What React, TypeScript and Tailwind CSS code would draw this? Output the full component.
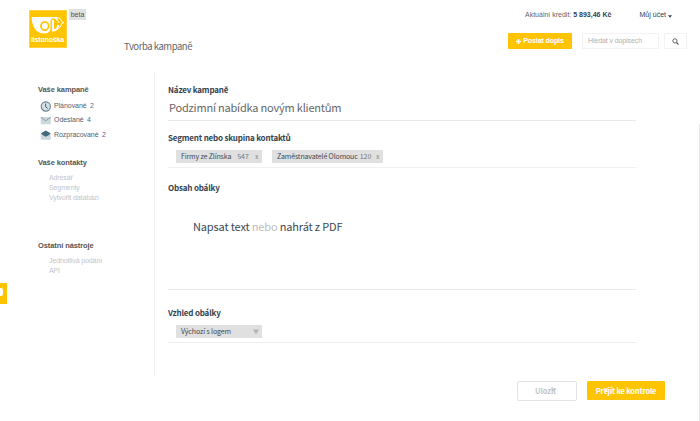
import type { ReactNode } from "react"

const sourceFont = "font-['Noto_Sans_CJK_JP','Noto_Sans',sans-serif]"

function Logo() {
  return (
    <div className="relative w-[38px] h-[38px] bg-[#ffc400]">
      <svg viewBox="0 0 38 38" className="absolute inset-0 w-full h-full" fill="none">
        <rect x="0.5" y="0.5" width="37" height="37" stroke="#fff" strokeWidth="0.7" strokeDasharray="1 1" opacity="0.7" />
        <path d="M2.600 7H21l1.500 2v7a7 7.500 0 0 1-8 7.500C7 23 2.600 16 2.600 7Z" fill="#fff" />
        <ellipse cx="15.800" cy="16" rx="3.800" ry="4.200" fill="#fff" stroke="#ffc400" strokeWidth="1.800" />
        <path d="M21.500 10h1.300v12h-1.300z" fill="#ffc400" />
        <path d="M24 10v10.500c3.400-.3 5.200-2.500 5.200-5.500" stroke="#fff" strokeWidth="2" />
        <path d="M20.500 7.700h4c2.600 0 3.700 1.100 4 2.800" stroke="#fff" strokeWidth="1.500" />
        <path d="M26 7.500c3.500-.5 6.200 1 6.700 4l2 1.200-2 1c-.6 2.800-2.200 4.300-4.200 4.800" stroke="#fff" strokeWidth="1" />
        <circle cx="29.500" cy="12" r="0.800" fill="#fff" />
      </svg>
      <span className="absolute left-0 w-[37px] top-[26px] text-center text-[7px] leading-[8px] tracking-[-0.15px] font-bold text-white">listonoška</span>
    </div>
  )
}

function ClockIcon() {
  return (
    <svg width="12" height="12" viewBox="0 0 12 12" fill="none">
      <circle cx="5.800" cy="6.500" r="4.600" fill="#d5e0e4" stroke="#668490" strokeWidth="1.100" />
      <path d="M5.600 3.600v3.200L7.700 8.400" stroke="#45616f" strokeWidth="1" />
    </svg>
  )
}

function MailIcon() {
  return (
    <svg width="12" height="12" viewBox="0 0 12 12" fill="none">
      <path d="M.7 3h10.100v7.200H.7z" fill="#cbd9dd" />
      <path d="M1 3.200l4.800 3.600 4.800-3.600" stroke="#7d98a2" strokeWidth="0.900" />
    </svg>
  )
}

function OpenMailIcon() {
  return (
    <svg width="12" height="12" viewBox="0 0 12 12">
      <path d="M.7 4.500h10.100v6.200H.7z" fill="#cbd9dd" />
      <path d="M5.800 1.600l4.700 2.600-1.500 1.700-3.200 1.800-3.200-1.800L1 4.200z" fill="#45687a" />
    </svg>
  )
}

const campaigns = [
  { name: "Plánované", count: 2, icon: <ClockIcon />, row: "h-[14px]", text: "w-[36px]" },
  { name: "Odeslané", count: 4, icon: <MailIcon />, row: "h-[14px]", text: "w-[33px]" },
  { name: "Rozpracované", count: 2, icon: <OpenMailIcon />, row: "h-[16px]", text: "w-[48px]" },
]

function SideTitle({ children }: { children: ReactNode }) {
  return <h2 className="text-[7.5px] leading-[10px] tracking-[-0.09px] font-bold text-[#555]">{children}</h2>
}

function SideLinks({ items }: { items: string[] }) {
  return (
    <ul className="pt-[5px] pl-[11px] text-[7px] leading-[10px] tracking-[-0.11px] text-[#c3c4cc]">
      {items.map(item => <li key={item}>{item}</li>)}
    </ul>
  )
}

function Label({ children }: { children: ReactNode }) {
  return <h3 className="text-[8px] leading-[12px] tracking-[-0.17px] font-bold text-[#34424f]">{children}</h3>
}

function Tag({ name, count, width, gap }: { name: string; count: number; width: string; gap: string }) {
  return (
    <div className={`${width} h-[13px] flex items-center whitespace-nowrap rounded-[1px] bg-[#e0e0e0] pl-[5px] pr-[4px] text-[7px] leading-[13px] tracking-[-0.13px] text-[#3d4852]`}>
      <span>{name}</span>
      <span className={`${gap} tracking-normal text-[#777]`}>{count}</span>
      <span className="ml-auto text-[6px] text-[#777]">x</span>
    </div>
  )
}

export default function App() {
  return (
    <div className="relative w-[700px] h-[421px] overflow-hidden bg-white font-['Liberation_Sans',Arial,sans-serif] text-[#555]">
      {/* Header */}
      <header className="flex h-[72px]">
        <div className="flex items-start gap-[2px] w-[124px] pl-[29px] pt-[10px]">
          <Logo />
          <span className="h-[11px] w-[17px] mt-[-1px] bg-[#e0e0e0] text-center text-[7px] leading-[11px] text-[#555]">beta</span>
        </div>
        <h1 className={`pt-[39px] text-[9.5px] leading-[14px] tracking-[-0.45px] text-[#666] ${sourceFont}`}>Tvorba kampaně</h1>
        <div className="ml-auto w-[192px] pt-[9px]">
          <div className="flex h-[12px] items-center pl-[17px] pr-[28px] text-[7px] text-[#666]">
            <span>Aktuální kredit: <b className="text-[#34424f]">5 893,46 Kč</b></span>
            <span className="ml-auto flex items-center gap-[2px] text-[#34424f]">
              Můj účet
              <svg width="4" height="3" viewBox="0 0 4 3" className="mt-[2px]"><path d="M0 .3h4L2 2.800z" fill="#34424f" /></svg>
            </span>
          </div>
          <div className="flex mt-[12px]">
            <button className="flex w-[64px] h-[16px] items-center justify-center gap-[2px] rounded-[1px] bg-[#ffc400] text-[7px] tracking-[-0.1px] font-bold text-white">
              <svg width="5" height="5" viewBox="0 0 5 5"><path d="M2.500 0v5M0 2.500h5" stroke="#fff" strokeWidth="1.700" /></svg>
              Poslat dopis
            </button>
            <div className="ml-[10px] flex w-[77px] h-[16px] items-center border border-[#f3f3f3] pl-[5px] text-[7px] tracking-[-0.1px] text-[#b0b0b0]">Hledat v dopisech</div>
            <button className="ml-[5px] flex w-[23px] h-[16px] items-center justify-center border border-[#f3f3f3]">
              <svg width="7" height="7" viewBox="0 0 7 7" fill="none"><circle cx="2.900" cy="2.900" r="2.100" stroke="#666" strokeWidth="1" /><path d="M4.500 4.500l2 2" stroke="#666" strokeWidth="1.200" /></svg>
            </button>
          </div>
        </div>
      </header>

      <div className="flex">
        {/* Sidebar */}
        <aside className="w-[154px] h-[304px] pl-[38px] pt-[13px]">
          <SideTitle>Vaše kampaně</SideTitle>
          <ul className="pt-[4px] pl-[2px]">
            {campaigns.map(c => (
              <li key={c.name} className={`flex items-center text-[7px] tracking-[-0.05px] text-[#53606b] ${c.row}`}>
                {c.icon}
                <span className={`ml-[2px] ${c.text}`}>{c.name}</span>
                <span className="text-[#5a6494]">{c.count}</span>
              </li>
            ))}
          </ul>
          <div className="pt-[15px]">
            <SideTitle>Vaše kontakty</SideTitle>
            <SideLinks items={["Adresář", "Segmenty", "Vytvořit databázi"]} />
          </div>
          <div className="pt-[38px]">
            <SideTitle>Ostatní nástroje</SideTitle>
            <SideLinks items={["Jednotlivá podání", "API"]} />
          </div>
        </aside>

        {/* Campaign form */}
        <main className={`w-[482px] h-[304px] border-l border-[#efefef] pl-[13px] ${sourceFont}`}>
          <section className="h-[49px] pt-[12px] border-b border-[#e9e9e9]">
            <Label>Název kampaně</Label>
            <p className="pl-px mt-[3px] text-[11px] leading-[16px] tracking-[-0.2px] text-[#666]">Podzimní nabídka novým klientům</p>
          </section>
          <section className="h-[47px] pt-[11px] border-b border-[#f1f1f1]">
            <Label>Segment nebo skupina kontaktů</Label>
            <div className="flex gap-[10px] pl-[8px] mt-[6px]">
              <Tag name="Firmy ze Zlínska" count={547} width="w-[86px]" gap="ml-[6px]" />
              <Tag name="Zaměstnavatelé Olomouc" count={120} width="w-[111px]" gap="ml-[2px]" />
            </div>
          </section>
          <section className="h-[122px] pt-[14px] border-b border-[#e9e9e9]">
            <Label>Obsah obálky</Label>
            <p className="pl-[25px] mt-[24px] text-[11px] leading-[16px] tracking-[-0.15px] text-[#3d4852]">
              Napsat text <span className="text-[#bbb]">nebo</span> nahrát z PDF
            </p>
          </section>
          <section className="h-[53px] pt-[17px] border-b border-[#ededed]">
            <Label>Vzhled obálky</Label>
            <div className="ml-[8px] mt-[6px] flex w-[86px] h-[13px] items-center justify-between rounded-[1px] bg-[#e0e0e0] pl-[5px] pr-[3px] text-[7px] leading-[13px] tracking-[-0.12px] text-[#3d4852]">
              Výchozí s logem
              <svg width="6" height="6" viewBox="0 0 6 6"><path d="M0 .5h6L3 5.500z" fill="#b4b4b4" /></svg>
            </div>
          </section>
        </main>
      </div>

      {/* Form actions */}
      <div className={`flex items-center justify-end gap-[10px] pr-[35px] mt-[4px] h-[21px] text-[7.5px] tracking-[-0.2px] font-bold ${sourceFont}`}>
        <button className="w-[60px] h-[20px] rounded-[2px] border border-[#e3e3e3] pr-[3px] leading-[18px] tracking-[-0.1px] text-[#c2c2c2]">Uložit</button>
        <button className="w-[78px] h-[19px] rounded-[1px] bg-[#ffc400] leading-[19px] text-white">Přejít ke kontrole</button>
      </div>

      {/* Feedback tab on the left edge */}
      <div className="absolute left-0 top-[283px] w-[7px] h-[21px] bg-[#ffc400] pt-[5px]">
        <div className="w-[3px] h-[8px] rounded-r-[2px] bg-white" />
      </div>
      <div className="absolute right-0 top-[124px] w-px h-[297px] bg-[#e6e6e6]" />
    </div>
  )
}
